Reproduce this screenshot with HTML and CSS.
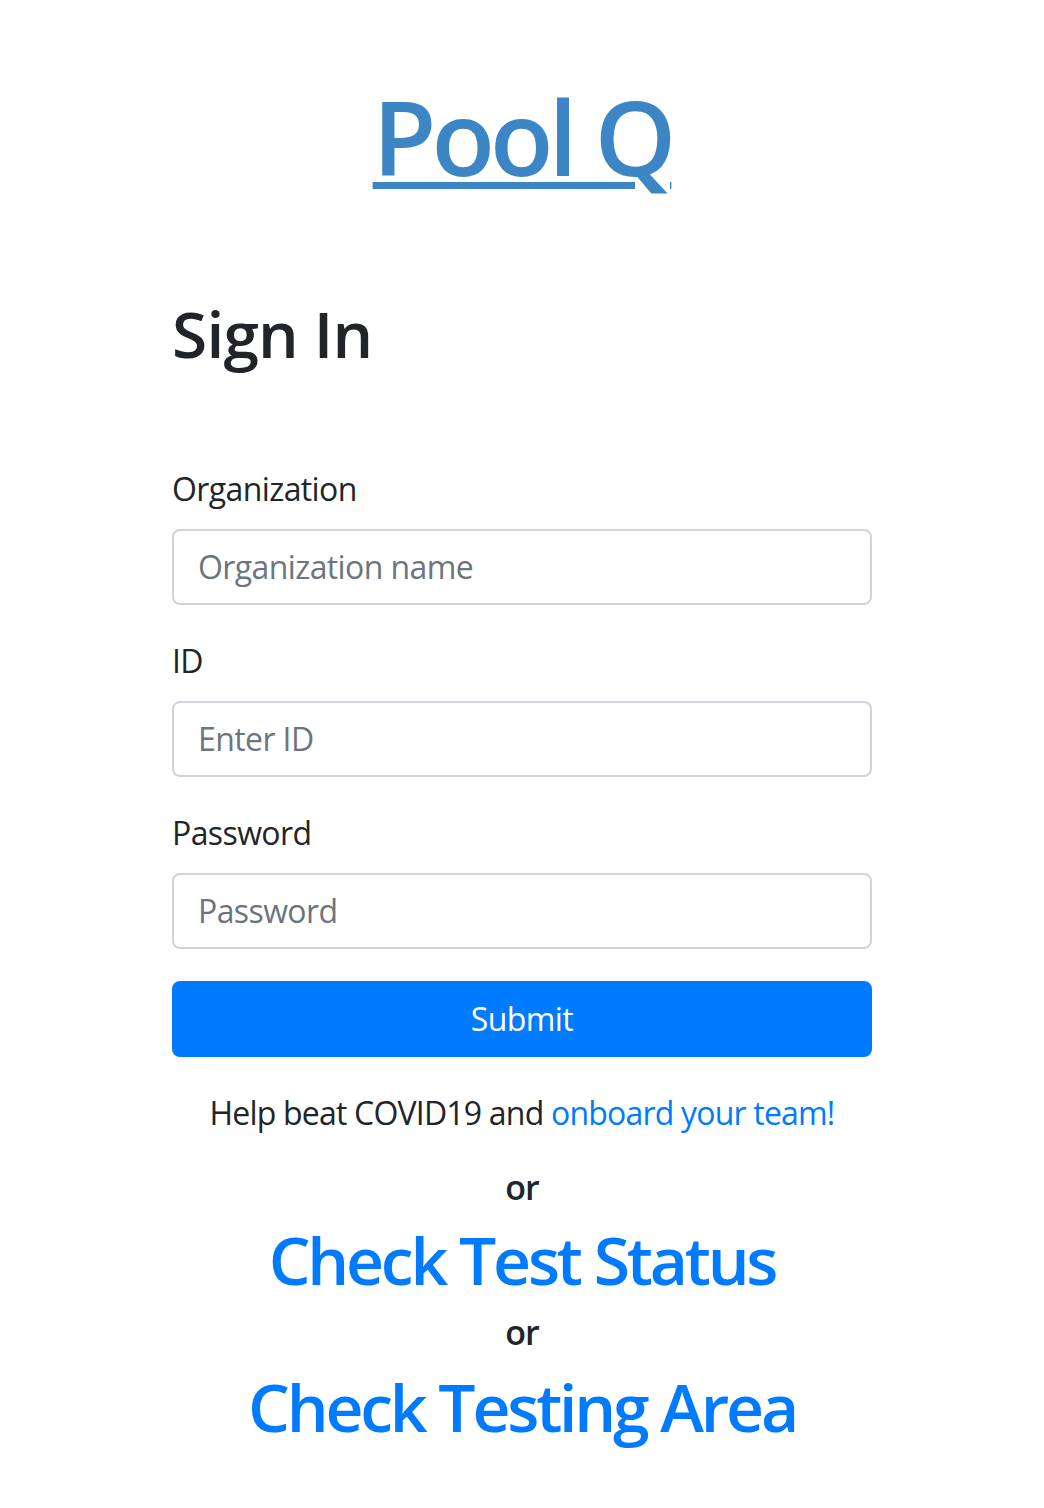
FILE: index.html
```html
<!DOCTYPE html>
<html lang="en">
<head>
<meta charset="utf-8">
<title>Pool Q - Sign In</title>
<link rel="stylesheet" href="styles.css">
</head>
<body>
<header class="brand">
  <h1 class="brand-title"><a href="#" class="brand-link">Pool Q</a></h1>
</header>
<main class="container">
  <h2 class="page-title">Sign In</h2>
  <form class="signin-form">
    <div class="form-group">
      <label class="form-label" for="org">Organization</label>
      <input class="form-control" id="org" type="text" placeholder="Organization name">
    </div>
    <div class="form-group">
      <label class="form-label" for="uid">ID</label>
      <input class="form-control" id="uid" type="text" placeholder="Enter ID">
    </div>
    <div class="form-group">
      <label class="form-label" for="pwd">Password</label>
      <input class="form-control" id="pwd" type="password" placeholder="Password">
    </div>
    <button class="btn-primary" type="submit">Submit</button>
  </form>
  <div class="extras">
    <p class="help-text">Help beat COVID19 and <a href="#" class="link">onboard your team!</a></p>
    <h5 class="or or-first">or</h5>
    <a href="#" class="big-link big-link-first">Check Test Status</a>
    <h5 class="or or-second">or</h5>
    <a href="#" class="big-link">Check Testing Area</a>
  </div>
</main>
</body>
</html>
```
FILE: styles.css
```css
* { box-sizing: border-box; }
html, body {
  margin: 0;
  padding: 0;
  background: #fff;
}
body {
  font-family: "Open Sans", "Noto Sans", sans-serif;
  font-size: 32px;
  line-height: 1.5;
  color: #212529;
  letter-spacing: -0.6px;
}
.brand {
  text-align: center;
  padding-top: 74px;
}
.brand-title {
  margin: 0;
  font-size: 104px;
  font-weight: 600;
  line-height: 1.2;
  letter-spacing: -5px;
}
.brand-link {
  color: #3d86c6;
  text-decoration: underline;
  text-decoration-thickness: 7px;
  text-underline-offset: 6px;
}
.container {
  width: 700px;
  margin: 0 auto;
}
.page-title {
  margin: 97px 0 92px;
  font-size: 64px;
  font-weight: 600;
  line-height: 1.2;
  letter-spacing: -0.8px;
}
.signin-form { margin: 0; }
.form-group { margin-bottom: 32px; }
.form-label {
  display: block;
  margin-bottom: 16px;
  line-height: 48px;
}
.form-control {
  display: block;
  width: 100%;
  height: 76px;
  padding: 12px 24px;
  font-family: inherit;
  font-size: 32px;
  letter-spacing: -0.6px;
  line-height: 48px;
  color: #495057;
  background: #fff;
  border: 2px solid #ced4da;
  border-radius: 8px;
  outline: none;
}
.form-control::placeholder { color: #6c757d; opacity: 1; }
.btn-primary {
  display: block;
  width: 100%;
  height: 76px;
  padding: 12px 24px;
  font-family: inherit;
  font-size: 32px;
  letter-spacing: -0.6px;
  line-height: 48px;
  color: #fff;
  background: #007bff;
  border: 2px solid #007bff;
  border-radius: 8px;
  cursor: pointer;
}
.extras {
  text-align: center;
}
.help-text {
  margin: 32px 0 0;
  letter-spacing: -0.8px;
}
.link, .big-link {
  color: #007bff;
  text-decoration: none;
}
.or {
  margin: 26px 0 6px;
  font-size: 34px;
  font-weight: 600;
  line-height: 48px;
  letter-spacing: -1px;
}
.or-second { margin-top: 7px; margin-bottom: 8px; }
.big-link {
  display: block;
  font-size: 66px;
  font-weight: 600;
  line-height: 84px;
  letter-spacing: -3.2px;
}
```
